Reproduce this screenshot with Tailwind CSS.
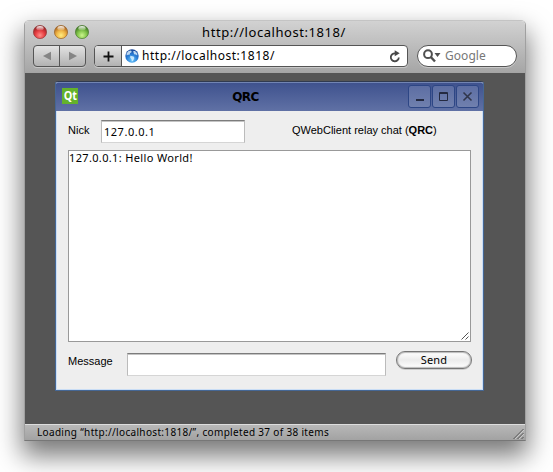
<!DOCTYPE html>
<html lang="en">
<head>
<meta charset="utf-8">
<title>http://localhost:1818/</title>
<script src="https://cdn.jsdelivr.net/npm/@tailwindcss/browser@4"></script>
</head>
<body class="h-[472px] w-[553px] overflow-hidden bg-white pl-6 pt-5 font-['Noto_Sans','Open_Sans',sans-serif] text-black">
<div class="flex h-[421px] w-[502px] flex-col overflow-visible rounded-t-[5px] border border-[#a0a0a0] border-t-[#c4c4c4] border-b-[#777] shadow-[0_13px_26px_2px_rgba(0,0,0,0.53)]">
  <header class="h-[52px] shrink-0 rounded-t-[4px] border-b border-[#a5a5a5] bg-linear-to-b from-[#d2d2d2] to-[#a6a6a6]">
    <div class="relative flex h-6 items-center justify-center">
      <svg class="absolute left-[7px] top-[3px]" width="60" height="17" viewBox="0 0 60 17">
        <defs>
          <radialGradient id="red" cx=".5" cy=".75" r=".7"><stop offset="0" stop-color="#ff8d88"/><stop offset=".5" stop-color="#e63e42"/><stop offset="1" stop-color="#8e2023"/></radialGradient>
          <radialGradient id="amber" cx=".5" cy=".75" r=".7"><stop offset="0" stop-color="#ffed82"/><stop offset=".5" stop-color="#efb445"/><stop offset="1" stop-color="#a35b1c"/></radialGradient>
          <radialGradient id="green" cx=".5" cy=".75" r=".7"><stop offset="0" stop-color="#cbf58d"/><stop offset=".5" stop-color="#83c54b"/><stop offset="1" stop-color="#39721f"/></radialGradient>
          <linearGradient id="shine" x2="0" y2="1"><stop stop-color="#fff" stop-opacity=".95"/><stop offset="1" stop-color="#fff" stop-opacity=".1"/></linearGradient>
        </defs>
        <g stroke-width=".7">
          <circle cx="8" cy="8" r="6.6" fill="url(#red)" stroke="#913b3b"/>
          <circle cx="29" cy="8" r="6.6" fill="url(#amber)" stroke="#99652b"/>
          <circle cx="50" cy="8" r="6.6" fill="url(#green)" stroke="#4d7c33"/>
        </g>
        <g fill="url(#shine)"><ellipse cx="8" cy="4.2" rx="3.6" ry="2.2"/><ellipse cx="29" cy="4.2" rx="3.6" ry="2.2"/><ellipse cx="50" cy="4.2" rx="3.6" ry="2.2"/></g>
      </svg>
      <h1 class="mr-[2px] -mt-[2px] text-[13px] leading-6 tracking-[0.56px]">http://localhost:1818/</h1>
    </div>
    <div class="flex pl-2">
      <div class="flex h-[22px] w-[53px] rounded-[4px] border border-[#555] bg-linear-to-b from-[#e3e3e3] to-[#b2b2b2] shadow-[0_1px_0_#c8c8c8]">
        <button class="flex w-[26px] items-center justify-center border-r border-[#555]" aria-label="Back"><svg width="10" height="10" viewBox="0 0 10 10"><path d="M9 .7v8.6L1 5z" fill="#858585"/></svg></button>
        <button class="flex w-[25px] items-center justify-center" aria-label="Forward"><svg width="10" height="10" viewBox="0 0 10 10"><path d="M1 .7v8.6L9 5z" fill="#858585"/></svg></button>
      </div>
      <div class="ml-2 flex h-[22px] w-[314px] overflow-hidden rounded-[4px] border border-[#555] bg-white shadow-[0_1px_0_#c8c8c8]">
        <button class="flex w-[27px] shrink-0 items-center justify-center border-r border-[#555] bg-linear-to-b from-[#e3e3e3] to-[#b2b2b2]" aria-label="Add bookmark"><svg width="11" height="11" viewBox="0 0 11 11"><path d="M5.5 .5v10M.5 5.5h10" stroke="#111" stroke-width="1.8"/></svg></button>
        <svg class="ml-[3px] mt-[3px] shrink-0" width="14" height="14" viewBox="0 0 14 14">
          <defs><radialGradient id="sea" cx=".5" cy=".8" r=".8"><stop stop-color="#69c8ff"/><stop offset=".55" stop-color="#2678d2"/><stop offset="1" stop-color="#153f91"/></radialGradient></defs>
          <circle cx="7" cy="7" r="6.7" fill="url(#sea)"/>
          <path d="M1.5 4.5 3.5 2 6 1.6 6.8 3 5 4.2 4.6 5.8 3 5.7 1.7 6.5zM8.2 2 10 2 12.4 4.6 12.2 6.5 10.6 5.6 9 5.2zM5.3 6.8 8.6 7.6 9.4 9 8 12 6.8 12.4 6.6 10.4 5.2 8.8z" fill="#e5f5ff" opacity=".8"/>
        </svg>
        <span class="ml-[3px] text-[12px] leading-5 tracking-[0.52px]">http://localhost:1818/</span>
        <svg class="ml-auto mr-[6px] mt-[4px]" width="12" height="13" viewBox="0 0 12 13"><path d="M9.8 7.5A4 4 0 1 1 6.2 3.3" fill="none" stroke="#484848" stroke-width="1.8"/><path d="M5.7.3v6l5-3z" fill="#484848"/></svg>
      </div>
      <div class="ml-[9px] flex h-[22px] w-[100px] items-center rounded-full border border-[#555] bg-white pl-[5px] shadow-[0_1px_0_#c8c8c8]">
        <svg width="18" height="14" viewBox="0 0 18 14"><circle cx="5" cy="5.2" r="3.9" fill="none" stroke="#505050" stroke-width="2"/><path d="m7.8 8 4.2 4.5" stroke="#505050" stroke-width="2.4"/><path d="M11.5 4h6l-3 4z" fill="#505050"/></svg>
        <span class="ml-[4px] text-[12px] leading-5 tracking-[0.05px] text-[#777]">Google</span>
      </div>
    </div>
  </header>

  <main class="min-h-0 flex-1 bg-[#555] pl-[30px] pt-2">
    <section class="h-[310px] w-[429px] rounded-t-[3px] border border-[#456795] border-t-[#303a50] bg-[#eee]">
      <div class="relative flex h-[29px] items-center justify-center rounded-t-[2px] border-t border-[#7184b3] bg-linear-to-b from-[#3f528e] to-[#6071a5]">
        <div class="absolute left-[6px] top-[5px] flex size-4 items-center justify-center bg-[#64b22b] pb-px font-['Open_Sans'] text-[12px] font-bold leading-none text-white"><span class="scale-x-90">Qt</span></div>
        <h2 class="mr-12 font-['DejaVu_Sans',sans-serif] text-[12px] font-bold leading-5 tracking-[-0.5px]">QRC</h2>
        <div class="absolute right-[4px] top-[2px] flex gap-px">
          <button class="flex h-[23px] w-[23px] items-center justify-center rounded-[3px] border border-[#2d4685] bg-linear-to-b from-[#5d6ea3] to-[#7080ae]" aria-label="Minimize"><svg width="11" height="11" viewBox="0 0 11 11"><path d="M2 9h8" stroke="#242a41" stroke-width="2"/></svg></button>
          <button class="flex h-[23px] w-[23px] items-center justify-center rounded-[3px] border border-[#2d4685] bg-linear-to-b from-[#5d6ea3] to-[#7080ae]" aria-label="Maximize"><svg width="11" height="11" viewBox="0 0 11 11"><path d="M1.5 1.5h8v8h-8zM1.5 2.5h8" fill="none" stroke="#242a41"/></svg></button>
          <button class="flex h-[23px] w-[23px] items-center justify-center rounded-[3px] border border-[#2d4685] bg-linear-to-b from-[#5d6ea3] to-[#7080ae]" aria-label="Close"><svg width="11" height="11" viewBox="0 0 11 11"><path d="m1.5 1.5 8 8m0-8-8 8" stroke="#30364b" stroke-width="1.6"/></svg></button>
        </div>
      </div>
      <div class="h-[279px] border border-t-0 border-[#c9ddf5] bg-[#eee] pl-[11px] pt-[9px] font-['Liberation_Sans',Arial,sans-serif] text-[11px]">
        <div class="flex h-[23px]">
          <label class="w-[33px] leading-[21px]">Nick</label>
          <div class="h-[23px] w-[144px] border border-[#bbb] border-t-[#7c7c7c] border-b-[#d5d5d5] bg-white pl-[2px] font-['Noto_Sans',sans-serif] text-[11px] leading-[21px] tracking-[0.52px] shadow-[inset_0_1px_0_#c4c4c4]">127.0.0.1</div>
          <p class="ml-[47px] leading-[21px]">QWebClient relay chat (<b>QRC</b>)</p>
        </div>
        <div class="relative mt-[7px] h-[192px] w-[403px] border border-[#999] bg-white font-['Noto_Sans',sans-serif] text-[11px] leading-[14px] tracking-[0.35px]">127.0.0.1: Hello World!
          <svg class="absolute bottom-px right-px" width="8" height="8" viewBox="0 0 8 8"><path d="m.5 7.5 7-7m-3 7 3-3" stroke="#555"/></svg>
        </div>
        <div class="mt-[9px] flex">
          <label class="w-[59px] leading-5">Message</label>
          <div class="mt-[2px] h-[23px] w-[259px] border border-[#bbb] border-t-[#7c7c7c] border-b-[#d5d5d5] bg-white shadow-[inset_0_1px_0_#c4c4c4]"></div>
          <button class="ml-[10px] h-[18px] w-[76px] rounded-full border border-[#757575] bg-linear-to-b from-white via-[#ececec] to-white font-['Noto_Sans',sans-serif] text-[11px] leading-[16px] tracking-[0.2px] shadow-[inset_0_0_1px_1px_#bbb,0_1px_0_#ccc]">Send</button>
        </div>
      </div>
    </section>
  </main>

  <footer class="relative h-4 shrink-0 border-t border-[#ddd] bg-linear-to-b from-[#b8b8b8] to-[#a2a2a2] pl-3 text-[10px] leading-[14px] tracking-[0.33px]">Loading “http://localhost:1818/”, completed 37 of 38 items
    <svg class="absolute bottom-px right-px" width="11" height="11" viewBox="0 0 11 11"><path d="m.5 11 10-10m-6 10 6-6m-2 6 2-2" stroke="#555"/><path d="m2 11 9-9m-5 9 5-5" stroke="#ddd" stroke-width=".6"/></svg>
  </footer>
</div>
</body>
</html>
